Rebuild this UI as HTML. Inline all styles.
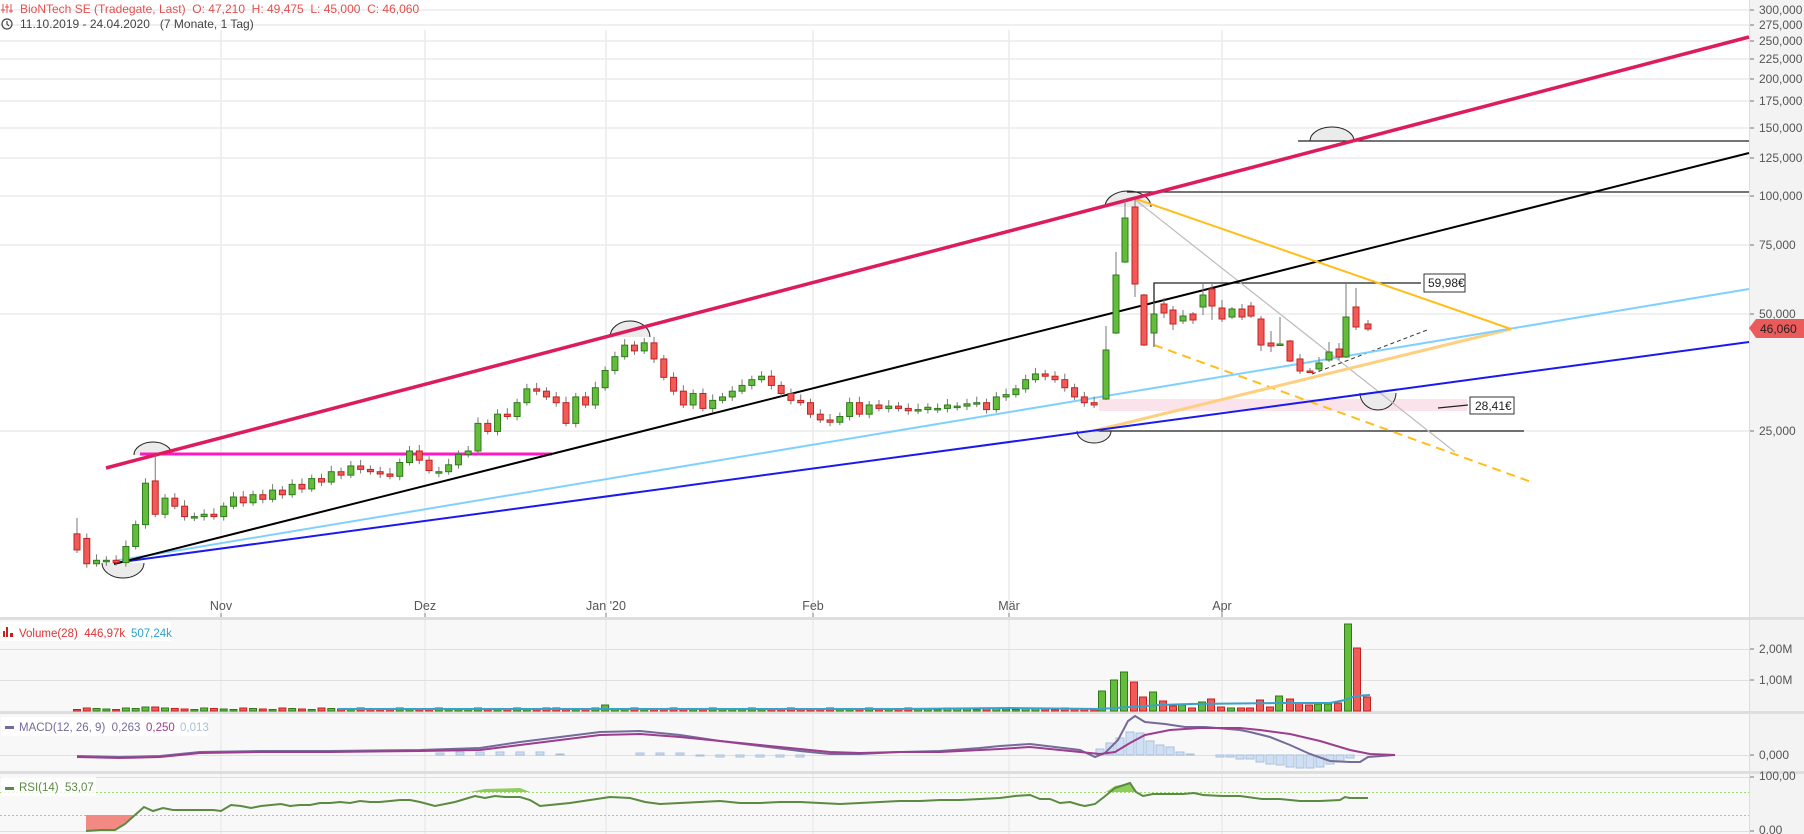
<!DOCTYPE html>
<html><head><meta charset="utf-8">
<style>
html,body{margin:0;padding:0;background:#fff;}
body{width:1804px;height:834px;overflow:hidden;position:relative;font-family:"Liberation Sans",sans-serif;}
svg{position:absolute;left:0;top:0;}
text{font-family:"Liberation Sans",sans-serif;}
</style></head><body>
<svg id="s" width="1804" height="834" viewBox="0 0 1804 834" xmlns="http://www.w3.org/2000/svg">
<rect x="0" y="0" width="1804" height="834" fill="#fff"/>
<rect x="0" y="619" width="1749" height="215" fill="#f8f8f8"/>
<rect x="1749" y="0" width="55" height="834" fill="#f3f3f3"/>
<line x1="1749.5" y1="0" x2="1749.5" y2="834" stroke="#ddd"/>
<g stroke="#ececec" stroke-width="1.5">
<line x1="0" y1="10" x2="1749" y2="10"/><line x1="0" y1="25" x2="1749" y2="25"/><line x1="0" y1="41" x2="1749" y2="41"/><line x1="0" y1="59" x2="1749" y2="59"/><line x1="0" y1="79" x2="1749" y2="79"/><line x1="0" y1="101" x2="1749" y2="101"/><line x1="0" y1="128" x2="1749" y2="128"/><line x1="0" y1="158" x2="1749" y2="158"/><line x1="0" y1="196" x2="1749" y2="196"/><line x1="0" y1="245" x2="1749" y2="245"/><line x1="0" y1="314" x2="1749" y2="314"/><line x1="0" y1="431" x2="1749" y2="431"/>
<line x1="221" y1="30" x2="221" y2="834"/><line x1="425" y1="30" x2="425" y2="834"/><line x1="606" y1="30" x2="606" y2="834"/><line x1="813" y1="30" x2="813" y2="834"/><line x1="1009" y1="30" x2="1009" y2="834"/><line x1="1222" y1="30" x2="1222" y2="834"/>
</g>
<g stroke="#e0e0e0" stroke-width="1">
<line x1="0" y1="649.5" x2="1749" y2="649.5"/><line x1="0" y1="680.5" x2="1749" y2="680.5"/>
<line x1="0" y1="755.5" x2="1749" y2="755.5"/>
<line x1="0" y1="777.5" x2="1749" y2="777.5"/><line x1="0" y1="831.5" x2="1749" y2="831.5"/>
</g>
<line x1="0" y1="792.5" x2="1749" y2="792.5" stroke="#9bdc6a" stroke-dasharray="2,2"/>
<line x1="0" y1="815.5" x2="1749" y2="815.5" stroke="#f3a0a0" stroke-dasharray="2,2"/>
<rect x="0" y="617" width="1804" height="3" fill="#dedede"/>
<rect x="0" y="711" width="1804" height="3" fill="#dedede"/>
<rect x="0" y="771" width="1804" height="3" fill="#dedede"/>
<g font-size="12.5" fill="#555" text-anchor="middle">
<text x="221" y="610">Nov</text><text x="425" y="610">Dez</text><text x="606" y="610">Jan '20</text><text x="813" y="610">Feb</text><text x="1009" y="610">Mär</text><text x="1222" y="610">Apr</text>
</g>
<g stroke="#888"><line x1="221" y1="613" x2="221" y2="617"/><line x1="425" y1="613" x2="425" y2="617"/><line x1="606" y1="613" x2="606" y2="617"/><line x1="813" y1="613" x2="813" y2="617"/><line x1="1009" y1="613" x2="1009" y2="617"/><line x1="1222" y1="613" x2="1222" y2="617"/></g>
<g font-size="12" fill="#555">
<text x="1759" y="14">300,000</text><text x="1759" y="29">275,000</text><text x="1759" y="45">250,000</text><text x="1759" y="63">225,000</text><text x="1759" y="83">200,000</text><text x="1759" y="105">175,000</text><text x="1759" y="132">150,000</text><text x="1759" y="162">125,000</text><text x="1759" y="200">100,000</text><text x="1759" y="249">75,000</text><text x="1759" y="318">50,000</text><text x="1759" y="435">25,000</text>
<text x="1759" y="653">2,00M</text><text x="1759" y="684">1,00M</text><text x="1759" y="759">0,000</text><text x="1759" y="780">100,00</text><text x="1759" y="834">0,00</text>
</g>
<g stroke="#777"><line x1="1750" y1="10" x2="1754" y2="10"/><line x1="1750" y1="25" x2="1754" y2="25"/><line x1="1750" y1="41" x2="1754" y2="41"/><line x1="1750" y1="59" x2="1754" y2="59"/><line x1="1750" y1="79" x2="1754" y2="79"/><line x1="1750" y1="101" x2="1754" y2="101"/><line x1="1750" y1="128" x2="1754" y2="128"/><line x1="1750" y1="158" x2="1754" y2="158"/><line x1="1750" y1="196" x2="1754" y2="196"/><line x1="1750" y1="245" x2="1754" y2="245"/><line x1="1750" y1="314" x2="1754" y2="314"/><line x1="1750" y1="431" x2="1754" y2="431"/><line x1="1750" y1="649" x2="1754" y2="649"/><line x1="1750" y1="680" x2="1754" y2="680"/><line x1="1750" y1="755" x2="1754" y2="755"/><line x1="1750" y1="777" x2="1754" y2="777"/><line x1="1750" y1="831" x2="1754" y2="831"/></g>
<path d="M1749 328 L1756 319 L1804 319 L1804 338 L1756 338 Z" fill="#ec5b5b"/>
<text x="1760" y="333" font-size="12" fill="#222">46,060</text>

<rect x="1099" y="399" width="368" height="12" fill="#fbe3ec"/>
<g fill="#ebebeb" stroke="none">
<path d="M134 455 A19 13 0 0 1 172 455 Z"/>
<path d="M610 337 A20 16 0 0 1 650 337 Z"/>
<path d="M1105 207 A23 16 0 0 1 1151 207 Z"/>
<path d="M1310 141 A22 14 0 0 1 1354 141 Z"/>
<path d="M102 563 A21 15 0 0 0 144 563 Z"/>
<path d="M1077 431 A17 12 0 0 0 1111 431 Z"/>
<path d="M1360 393 A18 17 0 0 0 1396 393 Z"/>
</g>
<g fill="none" stroke="#222" stroke-width="1">
<path d="M134 455 A19 13 0 0 1 172 455"/>
<path d="M610 337 A20 16 0 0 1 650 337"/>
<path d="M1105 207 A23 16 0 0 1 1151 207"/>
<path d="M1310 141 A22 14 0 0 1 1354 141"/>
<path d="M102 563 A21 15 0 0 0 144 563"/>
<path d="M1077 431 A17 12 0 0 0 1111 431"/>
<path d="M1360 393 A18 17 0 0 0 1396 393"/>
</g>
<g stroke="#222" stroke-width="1.3" fill="none">
<line x1="1127" y1="192" x2="1749" y2="192"/>
<line x1="1298" y1="141" x2="1749" y2="141"/>
<line x1="1094" y1="431" x2="1524" y2="431"/>
<polyline points="1154,347 1154,283 1421,283"/>
<line x1="1438" y1="408" x2="1468" y2="405"/>
</g>
<line x1="1133" y1="198" x2="1455" y2="452" stroke="#bbb" stroke-width="1.2"/>
<line x1="1154" y1="345" x2="1534" y2="483" stroke="#ffbe1a" stroke-width="2" stroke-dasharray="9,6"/>
<line x1="1312" y1="374" x2="1427" y2="330" stroke="#333" stroke-width="1" stroke-dasharray="4,3"/>
<line x1="140" y1="454" x2="552" y2="454" stroke="#ff19c0" stroke-width="3"/>
<line x1="1093" y1="431" x2="1511" y2="329" stroke="#ffcf80" stroke-width="3"/>
<line x1="114" y1="561" x2="1749" y2="289" stroke="#80d0ff" stroke-width="2"/>
<line x1="114" y1="563" x2="1749" y2="342" stroke="#1a1aee" stroke-width="2"/>
<line x1="114" y1="564" x2="1749" y2="153" stroke="#000" stroke-width="2"/>
<line x1="1133" y1="198" x2="1511" y2="329" stroke="#ffbe1a" stroke-width="2"/>
<line x1="106" y1="468" x2="1749" y2="37" stroke="#dc1c5c" stroke-width="3.5"/>
<g id="candles"></g>
<g id="vols"></g>
<rect x="1424" y="274" width="41" height="18" fill="#fff" stroke="#333"/>
<text x="1428" y="287" font-size="12" fill="#222">59,98€</text>
<rect x="1470" y="397" width="44" height="17" fill="#fff" stroke="#333"/>
<text x="1475" y="410" font-size="12" fill="#222">28,41€</text>

<polyline fill="none" stroke="#37a3cc" stroke-width="2" points="338,709 900,709 1010,708 1100,709 1130,707 1160,705 1190,704 1280,703 1330,703 1340,701 1345,700 1355,696 1370,695"/>
<g id="macdh"></g>
<polyline fill="none" stroke="#766a98" stroke-width="2" points="77,756 120,757 160,756 200,752 260,751 330,751 420,750 480,748 520,742 560,737 600,732 640,731 680,735 720,741 760,746 800,751 830,754 860,754 900,752 940,751 980,748 1000,746 1030,744 1080,750 1095,757 1105,753 1118,740 1128,721 1135,716 1145,722 1165,724 1185,727 1205,727 1240,730 1250,732 1270,737 1290,745 1310,754 1330,761 1350,762 1360,762 1368,757 1395,755"/>
<polyline fill="none" stroke="#9c3d8e" stroke-width="2" points="77,757 120,758 160,757 200,753 260,752 330,752 420,751 480,750 520,745 560,740 600,735 640,734 680,737 720,741 760,745 800,749 830,752 860,753 900,752 940,752 980,750 1000,749 1030,747 1080,752 1100,754 1115,752 1130,743 1145,735 1170,730 1200,728 1240,728 1260,730 1290,734 1320,741 1350,750 1370,754 1395,755"/>
<path fill="#f28a83" d="M86 815 L86 831 L100 830 L115 830 L125 824 L135 815 Z"/>
<path fill="#8fce5a" d="M470 792 L485 789 L520 788 L530 792 Z M1106 792 L1115 786 L1130 783 L1136 792 Z"/>
<polyline fill="none" stroke="#5b8a41" stroke-width="2" points="86,831 100,830 115,830 125,824 135,815 144,807 153,811 163,808 173,810 183,810 193,810 203,810 213,810 221,811 231,805 241,806 251,808 261,806 271,805 281,804 290,806 300,805 310,805 320,803 330,803 340,802 350,803 360,801 370,802 380,802 390,801 400,800 410,800 420,802 435,806 445,804 455,802 465,799 475,796 485,798 495,796 505,797 520,797 530,800 540,806 550,805 570,803 590,800 610,797 630,798 645,802 660,804 680,803 700,802 720,801 740,803 760,803 780,802 800,802 820,803 840,804 860,803 880,802 900,801 920,801 940,800 960,800 980,799 1000,798 1015,796 1030,795 1040,799 1050,799 1060,803 1070,802 1080,805 1085,806 1095,804 1104,797 1115,788 1130,783 1136,792 1143,796 1153,794 1163,794 1183,794 1194,793 1203,795 1222,796 1240,796 1262,799 1280,799 1300,801 1320,801 1340,800 1345,797 1350,798 1368,798"/>

<g>
<g stroke="#e05050" stroke-width="1" fill="none"><line x1="3" y1="4" x2="3" y2="13"/><line x1="7" y1="4" x2="7" y2="13"/><line x1="11" y1="4" x2="11" y2="13"/><line x1="1" y1="10" x2="5" y2="10"/><line x1="5" y1="7" x2="9" y2="7"/><line x1="9" y1="11" x2="13" y2="11"/></g>
<text x="20" y="13" font-size="12" fill="#e05050">BioNTech SE (Tradegate, Last)&#160; O: 47,210&#160; H: 49,475&#160; L: 45,000&#160; C: 46,060</text>
<circle cx="7" cy="24" r="5" fill="none" stroke="#444" stroke-width="1.2"/><path d="M7 21 V24 L9 26" fill="none" stroke="#444" stroke-width="1.2"/>
<text x="20" y="28" font-size="12" fill="#444">11.10.2019 - 24.04.2020&#160;&#160; (7 Monate, 1 Tag)</text>
</g>
<rect x="1" y="622" width="170" height="19" fill="#fff"/>
<g fill="#c62020"><rect x="3" y="631" width="2" height="6"/><rect x="6" y="627" width="2" height="10"/><rect x="10" y="633" width="3" height="4"/></g>
<text x="19" y="637" font-size="11.5" fill="#d33">Volume(28)&#160; 446,97k</text>
<text x="131" y="637" font-size="11.5" fill="#2fa0c8">507,24k</text>
<rect x="1" y="717" width="207" height="19" fill="#fff"/>
<rect x="5" y="726" width="9" height="3" fill="#766a98"/>
<text x="19" y="731" font-size="11.5" fill="#766a98">MACD(12, 26, 9)&#160; 0,263</text>
<text x="146" y="731" font-size="11.5" fill="#9c3d8e">0,250</text>
<text x="180" y="731" font-size="11.5" fill="#a9bfdc">0,013</text>
<rect x="1" y="777" width="95" height="19" fill="#fff" opacity="0.8"/>
<rect x="5" y="787" width="9" height="3" fill="#5b8a41"/>
<text x="19" y="791" font-size="11.5" fill="#5b8a41">RSI(14)&#160; 53,07</text>
</svg>
<script>
(function(){
var NS="http://www.w3.org/2000/svg";
function el(p,t,a){var e=document.createElementNS(NS,t);for(var k in a)e.setAttribute(k,a[k]);p.appendChild(e);return e;}
var S=1.1505;
var P=[478,490,487,487,489,475,456,420,447,433,440,449,449,447,449,440,432,437,430,434,426,430,421,425,416,419,410,413,405,408,410,412,414,402,392,400,409,410,404,395,392,368,375,360,362,350,338,340,345,350,368,345,352,337,322,310,300,305,298,312,328,340,352,342,355,348,345,340,335,330,327,335,342,348,350,360,365,367,362,350,360,352,355,353,355,357,356,354,355,352,353,351,350,356,345,343,338,330,325,327,330,337,345,350,352];
var opens={0:464,1:468,8:418};
var C=[];var prev=464;
for(var i=0;i<105;i++){var c=P[i]*S;var o=(opens[i]!==undefined?opens[i]*S:prev);
 if(Math.abs(o-c)<2){o=c+1.5;}
 var x=77+i*9.78;C.push([x,o,c,Math.min(o,c)-4-(i%3),Math.max(o,c)+3+(i%2)]);prev=c;}
C[8][3]=455;C[0][3]=518;
var R=[[1106,399,350,326,400],[1116,333,275,252,334],[1125,262,218,200,263],[1135,207,284,200,297],[1144,295,345,294,346],[1154,333,314,302,347],[1164,304,313,298,318],[1173,310,324,306,330],[1183,321,316,310,324],[1193,314,320,312,324],[1203,307,295,284,315],[1212,289,306,283,320],[1222,308,319,300,322],[1232,317,309,307,319],[1242,309,317,304,320],[1251,306,316,302,318],[1261,319,345,316,351],[1271,343,346,331,352],[1280,345,344,317,346],[1290,341,361,340,362],[1300,359,371,354,374],[1310,371,371.5,368,373],[1319,369,363,357,371],[1329,360,352,342,362],[1339,349,357,343,360],[1346,357,317,284,358],[1356,307,327,288,330],[1368,324,329,320,331]];
C=C.concat(R);
var g=document.getElementById('candles');
C.forEach(function(d){var x=d[0],o=d[1],c=d[2],up=c<o;
 var fill=up?'#63bd3a':'#f05b58',st=up?'#2f7a1c':'#c42222';
 el(g,'line',{x1:x,y1:d[3],x2:x,y2:d[4],stroke:'#777','stroke-width':1});
 var t=Math.min(o,c),h=Math.max(Math.abs(o-c),1.5);
 el(g,'rect',{x:x-3,y:t,width:6,height:h,fill:fill,stroke:st,'stroke-width':1});});
var vg=document.getElementById('vols');
var base=711;
var V=[[1102,691,1],[1114,680,1],[1124,672,1],[1134,682,0],[1143,697,0],[1153,692,1],[1163,701,0],[1173,706,0],[1182,705,1],[1192,708,0],[1202,702,1],[1211,699,0],[1221,707,0],[1231,708,1],[1241,708,0],[1250,708,0],[1260,700,0],[1270,707,0],[1279,696,1],[1290,699,0],[1299,703,0],[1309,705,0],[1318,704,1],[1328,704,1],[1338,703,0],[1348,624,1],[1357,648,0],[1367,697,0]];
for(var i=104;i>=0;i--){var x=77+i*9.78;var up=C[i][2]<C[i][1];var hgt=1.5+((i*7)%4)*0.5;
 if(i==7||i==8)hgt=4;if(i==57||i==48)hgt=3;if(i==54)hgt=6;
 V.unshift([x,base-hgt,up?1:0]);}
V.forEach(function(d){el(vg,'rect',{x:d[0]-3.5,y:d[1],width:7,height:base-d[1],fill:d[2]?'#63bd3a':'#f05b58',stroke:d[2]?'#2f7a1c':'#c42222','stroke-width':1});});
var mh=document.getElementById('macdh');
var H=[[440,753],[460,752],[480,752],[500,752],[520,752],[540,752],[560,754],[640,753],[660,753],[680,753],[700,756],[720,757],[740,757],[760,757],[780,757],[800,757],[1100,749],[1110,743],[1120,738],[1130,732],[1140,733],[1150,741],[1160,745],[1170,747],[1180,752],[1190,754],[1220,757],[1230,757],[1240,759],[1250,759],[1260,762],[1270,764],[1280,765],[1290,767],[1300,768],[1310,768],[1320,767],[1330,764],[1340,762],[1350,758]];
H.forEach(function(d){var y=Math.min(d[1],755),h=Math.max(Math.abs(d[1]-755),1);el(mh,'rect',{x:d[0]-4,y:y,width:8,height:h,fill:'#cfe0f5',stroke:'#a9bfdc','stroke-width':1});});
})();
</script>
</body></html>
